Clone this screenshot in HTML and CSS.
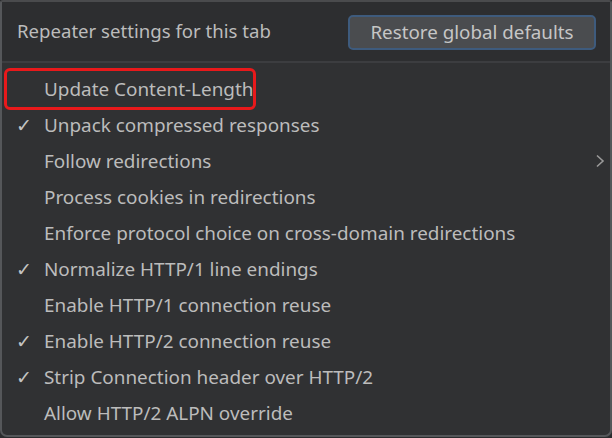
FILE: index.html
```html
<!DOCTYPE html>
<html>
<head>
<meta charset="utf-8">
<link rel="stylesheet" href="styles.css">
</head>
<body>
<div class="panel">
  <div class="header">
    <span class="title">Repeater settings for this tab</span>
    <button class="btn">Restore global defaults</button>
  </div>
  <div class="list">
    <div class="item highlight"><span class="check"></span><span class="label">Update Content-Length</span></div>
    <div class="item"><span class="check">✓</span><span class="label">Unpack compressed responses</span></div>
    <div class="item"><span class="check"></span><span class="label">Follow redirections</span>
      <svg class="chev" width="10" height="14" viewBox="0 0 10 14"><path d="M2 1.5 L8 7 L2 12.5" fill="none" stroke="#9a9a9a" stroke-width="1.6"/></svg>
    </div>
    <div class="item"><span class="check"></span><span class="label">Process cookies in redirections</span></div>
    <div class="item"><span class="check"></span><span class="label">Enforce protocol choice on cross-domain redirections</span></div>
    <div class="item"><span class="check">✓</span><span class="label">Normalize HTTP/1 line endings</span></div>
    <div class="item"><span class="check"></span><span class="label">Enable HTTP/1 connection reuse</span></div>
    <div class="item"><span class="check">✓</span><span class="label">Enable HTTP/2 connection reuse</span></div>
    <div class="item"><span class="check">✓</span><span class="label">Strip Connection header over HTTP/2</span></div>
    <div class="item"><span class="check"></span><span class="label">Allow HTTP/2 ALPN override</span></div>
  </div>
</div>
</body>
</html>
```
FILE: styles.css
```css
html, body {
  margin: 0;
  padding: 0;
  background: #2b2c2e;
}
body {
  width: 612px;
  height: 438px;
  overflow: hidden;
  font-family: "Noto Sans", "Open Sans", sans-serif;
  color: #bdbdbd;
}
.panel {
  box-sizing: border-box;
  width: 612px;
  height: 437px;
  border: 2px solid #55575a;
  border-top-color: #4a4b4d;
  border-radius: 3px 3px 7px 7px;
  background: #303133;
  display: flex;
  flex-direction: column;
}
.header {
  height: 61px;
  flex: none;
  box-sizing: border-box;
  display: flex;
  align-items: center;
  justify-content: space-between;
  padding: 0 14px 2px 15px;
  background: #2d2e30;
  border-bottom: 2px solid #3c3d40;
}
.title {
  font-size: 18.6px;
  color: #bcbcbc;
}
.btn {
  box-sizing: border-box;
  width: 248px;
  height: 35px;
  margin-top: 3px;
  background: #4a4c4f;
  border: 2px solid #3e5b7d;
  border-radius: 5px;
  color: #c6c6c6;
  font-family: "Noto Sans", "Open Sans", sans-serif;
  font-size: 18.8px;
  padding: 0;
}
.list {
  padding-top: 8px;
  display: flex;
  flex-direction: column;
}
.item {
  height: 36px;
  display: flex;
  align-items: center;
  font-size: 18.9px;
  color: #bcbcbc;
  position: relative;
  white-space: nowrap;
}
.check {
  width: 42px;
  box-sizing: border-box;
  padding-left: 14px;
  font-size: 19px;
  color: #c4c4c4;
  flex: none;
}
.highlight {
  width: 246px;
  margin-left: 5px;
  outline: 3px solid #e8191b;
  outline-offset: 0;
  border-radius: 3px;
}
.highlight .check {
  width: 37px;
}
.chev {
  position: absolute;
  right: 5px;
  top: 11px;
}
```
